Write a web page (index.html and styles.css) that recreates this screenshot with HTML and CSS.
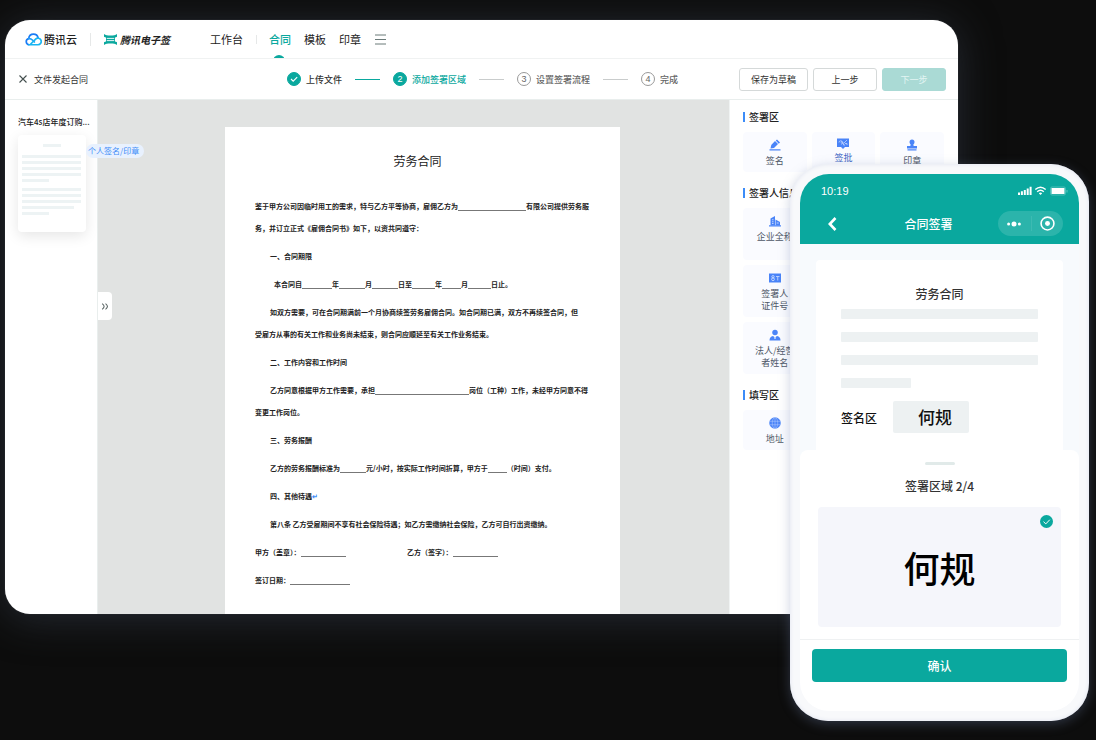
FILE: index.html
```html
<!DOCTYPE html>
<html lang="zh-CN">
<head>
<meta charset="utf-8">
<title>腾讯电子签</title>
<link rel="stylesheet" href="styles.css">
</head>
<body>
<div class="stage">
  <main class="window">
    <header class="topbar">
      <a class="brand" href="#">
        <svg class="brand-cloud" viewBox="0 0 34 26" fill="none" stroke-width="3.4" stroke-linecap="round" stroke-linejoin="round">
          <path d="M8 23.5a6.3 6.3 0 0 1-.6-12.4C8 6 12 2.300 17 2.300c4.600 0 8.300 3 9.300 7.400" stroke="#1a7cf5"/>
          <path d="M7.500 11.200c3.200-.6 5.300.8 7.300 2.800l4 4" stroke="#22a0f5"/>
          <path d="M8 23.500h18a6.600 6.600 0 1 0-4.800-11.300L10.500 23" stroke="#19b5f1"/>
        </svg>
        <span>腾讯云</span>
      </a>
      <span class="rule"></span>
      <a class="product" href="#">
        <svg class="product-mark" viewBox="0 0 26 22" fill="#0aa89e">
          <path d="M0 0c3 2.600 7 3.200 13 3.200S23 2.600 26 0v5.500c-1.500.8-2.800 1.200-4 1.500v8c1.200.3 2.500.7 4 1.500V22c-3-2.600-7-3.200-13-3.200S3 19.400 0 22v-5.500c1.500-.8 2.800-1.200 4-1.500V7C2.800 6.700 1.500 6.300 0 5.500z"/>
          <path d="M5.500 8.800h15M5.500 13.200h15" stroke="#fff" stroke-width="1.800"/>
        </svg>
        <span>腾讯电子签</span>
      </a>
      <nav class="nav">
        <a href="#">工作台</a>
        <span class="rule rule-short"></span>
        <a class="current" href="#">合同</a>
        <a href="#">模板</a>
        <a href="#">印章</a>
      </nav>
      <button class="icon-button" type="button" aria-label="菜单">
        <svg class="menu-icon" viewBox="0 0 11 11" stroke="#6b7a79" stroke-width="1"><path d="M0 1h11M0 5.500h11M0 10h11"/></svg>
      </button>
    </header>

    <div class="flowbar">
      <div class="flow-name">
        <button class="icon-button" type="button" aria-label="关闭">
          <svg class="close-icon" viewBox="0 0 8 8" stroke="#44504f" stroke-width="1.100"><path d="M.5.5l7 7M7.500.5l-7 7"/></svg>
        </button>
        <span>文件发起合同</span>
      </div>
      <ol class="steps">
        <li class="step done"><span class="dot"><svg class="tick" viewBox="0 0 8 8" fill="none" stroke="#fff" stroke-width="1.100"><path d="M1 4l2.200 2.200L7.200 2.200"/></svg></span>上传文件</li>
        <li class="link link-done"></li>
        <li class="step active"><span class="dot">2</span>添加签署区域</li>
        <li class="link"></li>
        <li class="step"><span class="dot">3</span>设置签署流程</li>
        <li class="link"></li>
        <li class="step"><span class="dot">4</span>完成</li>
      </ol>
      <div class="actions">
        <button class="button wide" type="button">保存为草稿</button>
        <button class="button" type="button">上一步</button>
        <button class="button primary" type="button" disabled>下一步</button>
      </div>
    </div>

    <div class="workspace">
      <aside class="files">
        <h2 class="file-name">汽车4s店年度订购...</h2>
        <div class="thumb">
          <i class="thumb-line head"></i>
          <i class="thumb-line"></i><i class="thumb-line"></i><i class="thumb-line"></i><i class="thumb-line"></i><i class="thumb-line short"></i>
          <i class="thumb-line next"></i><i class="thumb-line"></i><i class="thumb-line"></i><i class="thumb-line long"></i><i class="thumb-line short"></i>
          <span class="tag">个人签名/印章</span>
        </div>
      </aside>

      <section class="canvas">
        <button class="expand" type="button" aria-label="展开">
          <svg class="expand-icon" viewBox="0 0 8 8" fill="none" stroke="#55605f" stroke-width="1.200"><path d="M.8.8Q3 2.500 3 4T.8 7.200M4.600.8Q6.800 2.500 6.800 4T4.600 7.200"/></svg>
        </button>
        <article class="paper">
          <h1>劳务合同</h1>
          <p>鉴于甲方公司因临时用工的需求，特与乙方平等协商，雇佣乙方为<span class="blank b68"></span>有限公司提供劳务服<br>务，并订立正式《雇佣合同书》如下，以资共同遵守：</p>
          <p class="indent">一、合同期限</p>
          <p class="indent extra">本合同自<span class="blank b30"></span>年<span class="blank b26"></span>月<span class="blank b26"></span>日至<span class="blank b23"></span>年<span class="blank b19"></span>月<span class="blank b23"></span>日止。</p>
          <p class="indent">如双方需要，可在合同期满前一个月协商续签劳务雇佣合同。如合同期已满，双方不再续签合同，但<br>受雇方从事的有关工作和业务尚未结束，则合同应顺延至有关工作业务结束。</p>
          <p class="indent">二、工作内容和工作时间</p>
          <p class="indent">乙方同意根据甲方工作需要，承担<span class="blank b94"></span>岗位（工种）工作，未经甲方同意不得<br>变更工作岗位。</p>
          <p class="indent">三、劳务报酬</p>
          <p class="indent">乙方的劳务报酬标准为<span class="blank b26"></span>元/小时，按实际工作时间折算，甲方于<span class="blank b19"></span>（时间）支付。</p>
          <p class="indent">四、其他待遇<span class="return">↵</span></p>
          <p class="indent">第八条 乙方受雇期间不享有社会保险待遇；如乙方需缴纳社会保险，乙方可自行出资缴纳。</p>
          <p class="parties"><span>甲方（盖章）：<span class="blank b45"></span></span><span>乙方（签字）：<span class="blank b45"></span></span></p>
          <p>签订日期：<span class="blank b60"></span></p>
        </article>
      </section>

      <aside class="palette">
        <h2>签署区</h2>
        <div class="tiles">
          <button class="tile" type="button">
            <svg class="tile-icon" viewBox="0 0 24 24" fill="#4a84f8"><path d="M3 19l1.500-7L12 4l6 6-8 8z"/><path d="M13.500 3L16 1l6 6-2.500 2.500z"/><path d="M1 20.500h22v2.500H1z"/></svg>
            <span>签名</span>
          </button>
          <button class="tile chosen" type="button">
            <svg class="tile-icon" viewBox="0 0 24 24" fill="#4a84f8"><path d="M0 1h24v17h-8l-4 4-4-4H0z"/><path d="M4 9a3.500 3.500 0 1 1 4 3.500M8 9.500a2 2 0 1 1 3 2M20 4l-7 7v3h3M16 11h4v3" fill="none" stroke="#dbe7ff" stroke-width="1.300"/></svg>
            <span>签批</span>
          </button>
          <button class="tile" type="button">
            <svg class="tile-icon" viewBox="0 0 24 24" fill="#4a84f8"><circle cx="12" cy="6" r="5"/><path d="M9.500 9h5l.8 5H22v5H2v-5h6.700z"/><path d="M3 20.500h18V23H3z"/></svg>
            <span>印章</span>
          </button>
        </div>
        <h2>签署人信息</h2>
        <div class="tiles tall">
          <button class="tile" type="button">
            <svg class="tile-icon" viewBox="0 0 24 24" fill="#4a84f8"><path d="M3 7l9-5v19H3z"/><path d="M13 9l9 5v7h-9z"/><path d="M0 20.500h24V23H0z"/><path d="M6 9.500h3M6 13.500h3M6 17h3M15.500 16h4" stroke="#fff" stroke-width="1.300"/></svg>
            <span>企业全称</span>
          </button>
          <button class="tile" type="button">
            <svg class="tile-icon" viewBox="0 0 24 24" fill="#4a84f8"><path d="M0 3h24v18H0z"/><g fill="none" stroke="#dbe7ff" stroke-width="1.500"><circle cx="8" cy="9.500" r="2.400"/><circle cx="8" cy="14.500" r="2.800"/><path d="M14 9h7M17.500 9v8"/></g></svg>
            <span>签署人<br>证件号</span>
          </button>
          <button class="tile" type="button">
            <svg class="tile-icon" viewBox="0 0 24 24" fill="#4a84f8"><circle cx="12" cy="7" r="5.500"/><path d="M1 23q0-8 7-9l4 3 4-3q7 1 7 9z"/><path d="M12 16v4" stroke="#fff" stroke-width="2"/></svg>
            <span>法人/经营<br>者姓名</span>
          </button>
        </div>
        <h2>填写区</h2>
        <div class="tiles">
          <button class="tile" type="button">
            <svg class="tile-icon" viewBox="0 0 24 24"><circle cx="12" cy="12" r="11.500" fill="#4a84f8"/><g fill="none" stroke="#a9c4fd" stroke-width="1.200"><ellipse cx="12" cy="12" rx="5.500" ry="11"/><path d="M12 0v24M1 8.500h22M1 15.500h22"/></g></svg>
            <span>地址</span>
          </button>
        </div>
      </aside>
    </div>
  </main>

  <section class="phone">
    <div class="screen">
      <header class="phone-head">
        <div class="status">
          <span>10:19</span>
          <svg class="status-icons" viewBox="0 0 50 10" fill="#fff">
            <path d="M0 6.500h2V9H0zM2.900 5.300h2V9h-2zM5.800 3.900h2V9h-2zM8.700 2.400h2V9h-2zM11.600.7h2V9h-2z"/>
            <g fill="none" stroke="#fff" stroke-width="1.500"><path d="M17.300 3.500q5.200-4.600 10.400 0M19.200 5.700q3.300-2.800 6.600 0"/></g>
            <path d="M20.800 7.200q1.700-1.400 3.400 0L22.500 9z"/>
            <rect x="32.500" y="1" width="15" height="8" rx="1.500" fill="none" stroke="#5cc5bf" stroke-width=".8"/>
            <path d="M33.500 2h13v6h-13z"/><path d="M48.500 4h1v2.400h-1z" fill="#5cc5bf"/>
          </svg>
        </div>
        <div class="phone-nav">
          <button class="icon-button back" type="button" aria-label="返回">
            <svg class="back-icon" viewBox="0 0 9 14" fill="none" stroke="#fff" stroke-width="2.600"><path d="M7.500 1L1.800 7l5.700 6"/></svg>
          </button>
          <h2>合同签署</h2>
          <div class="capsule">
            <button class="icon-button" type="button" aria-label="更多"><svg class="more-icon" viewBox="0 0 14 6" fill="#fff"><circle cx="1.600" cy="3" r="1.500"/><circle cx="7" cy="3" r="2.500"/><circle cx="12.400" cy="3" r="1.500"/></svg></button>
            <button class="icon-button target" type="button" aria-label="关闭"><svg class="target-icon" viewBox="0 0 14 14" fill="none" stroke="#fff" stroke-width="1.500"><circle cx="7" cy="7" r="6"/><circle cx="7" cy="7" r="2.300" fill="#fff" stroke="none"/></svg></button>
          </div>
        </div>
      </header>

      <div class="preview">
        <div class="preview-card">
          <h3>劳务合同</h3>
          <i class="bar"></i><i class="bar"></i><i class="bar"></i><i class="bar bar-short"></i>
          <div class="sign-row"><span>签名区</span><span class="sign-slot">何规</span></div>
        </div>
      </div>

      <div class="sheet">
        <i class="handle"></i>
        <h3>签署区域 2/4</h3>
        <div class="signature">
          <span>何规</span>
          <svg class="picked" viewBox="0 0 13 13" fill="none"><circle cx="6.500" cy="6.500" r="6.500" fill="#0aa89e"/><path d="M3.500 6.700l2.300 2.200 4-4.200" stroke="#fff" stroke-width="1"/></svg>
        </div>
        <footer class="confirm-bar"><button class="confirm" type="button">确认</button></footer>
      </div>
    </div>
  </section>
</div>
</body>
</html>
```
FILE: styles.css
```css
* { box-sizing: border-box; }

body {
  margin: 0;
  background: #0d0d0d;
  color: #333;
  font-family: "Noto Sans CJK SC", "Noto Sans", sans-serif;
}

h1, h2, h3, p, ol { margin: 0; padding: 0; font-weight: 500; }
a { color: inherit; text-decoration: none; }
i { display: block; }
svg { display: block; flex: none; }
button { font-family: inherit; padding: 0; border: 0; background: none; color: inherit; }

.icon-button { display: flex; align-items: center; justify-content: center; }

.stage {
  position: relative;
  min-height: 100vh;
  padding: 20px 138px 126px 5px;
  overflow: hidden;
}

/* Desktop window */
.window {
  overflow: hidden;
  border-radius: 25px;
  background: #fff;
  box-shadow: 0 4px 40px #262b33, 0 0 1px #888;
}

.topbar {
  display: flex;
  align-items: center;
  height: 39px;
  padding: 0 20px;
  border-bottom: 1px solid #f0f2f2;
  font-size: 11px;
  color: #222;
}

.brand, .product { display: flex; align-items: center; gap: 2px; }
.brand { font-weight: 500; }
.brand-cloud { width: 17px; height: 13px; }
.rule { width: 1px; height: 13px; margin: 0 13px; background: #e6e8e8; }
.rule-short { height: 9px; }
.product { gap: 3px; font-size: 10px; font-weight: 700; font-style: italic; }
.product-mark { width: 13px; height: 11px; }
.nav { display: flex; align-items: center; align-self: stretch; margin-left: 40px; margin-right: 14px; }
.nav a { display: flex; align-items: center; align-self: stretch; margin-right: 13px; }
.nav a:first-child, .nav a:last-child { margin-right: 0; }
.nav .rule-short { margin: 0 12px 0 13px; }
.nav .current { position: relative; overflow: hidden; color: #0aa89e; font-weight: 500; }
.nav .current::after {
  content: "";
  position: absolute;
  left: 4px;
  bottom: -9px;
  width: 12px;
  height: 12px;
  border-radius: 50%;
  background: #0aa89e;
}
.menu-icon { width: 11px; height: 11px; }

.flowbar {
  display: grid;
  grid-template-columns: 1fr auto 1fr;
  align-items: center;
  height: 41px;
  padding: 0 12px 0 14px;
  border-bottom: 1px solid #e9eeed;
  font-size: 9px;
}
.flow-name { display: flex; align-items: center; gap: 7px; }
.close-icon { width: 8px; height: 8px; }
.steps { display: flex; align-items: center; gap: 13px; list-style: none; }
.step { display: flex; align-items: center; gap: 5px; color: #666; }
.dot {
  display: flex;
  align-items: center;
  justify-content: center;
  width: 14px;
  height: 14px;
  border: 1px solid #999;
  border-radius: 50%;
  font-family: "Liberation Sans", Arial, sans-serif;
}
.done { color: #333; }
.active { color: #0aa89e; font-weight: 500; }
.done .dot, .active .dot { border-color: #0aa89e; background: #0aa89e; color: #fff; }
.tick { width: 8px; height: 8px; }
.link { width: 25px; height: 1px; background: #c9cccc; }
.link-done { background: #0aa89e; }
.actions { display: flex; justify-content: flex-end; gap: 5px; }
.button {
  width: 64px;
  height: 23px;
  border: 1px solid #d5d9d9;
  border-radius: 3px;
  background: #fff;
  font-size: 9px;
  color: #333;
}
.wide { width: 69px; }
.primary { border-color: #aadad5; background: #aadad5; color: #e2f5f3; }

.workspace { display: grid; grid-template-columns: 93px 1fr 229px; }

.files { padding: 14px 11px 0 13px; border-right: 1px solid #e9eeed; }
.file-name { font-size: 8px; line-height: 16px; font-weight: 500; color: #222; white-space: nowrap; }
.thumb {
  position: relative;
  height: 97px;
  margin-top: 5px;
  padding: 9px 5px 0 4px;
  border-radius: 4px;
  background: #fff;
  box-shadow: 0 4px 14px rgba(0, 0, 0, .1);
}
.thumb-line { height: 3px; margin-bottom: 3px; background: #edf3f4; }
.thumb-line.head { width: 18px; margin: 0 auto 8px; }
.thumb-line.next { margin-top: 6px; }
.thumb-line.short { width: 27px; }
.thumb-line.long { width: 52px; }
.tag {
  position: absolute;
  left: 68px;
  top: 9px;
  z-index: 1;
  padding: 0 5px 0 2px;
  border-radius: 7px;
  background: #e8f1fe;
  color: #3c8cf8;
  font-size: 8px;
  line-height: 14px;
  white-space: nowrap;
}

.canvas { position: relative; padding: 27px 109px 0 127px; background: #e1e3e2; }
.expand {
  position: absolute;
  left: 0;
  top: 192px;
  display: flex;
  align-items: center;
  justify-content: center;
  width: 14px;
  height: 28px;
  border-radius: 0 4px 4px 0;
  background: #fff;
}
.expand-icon { width: 8px; height: 7px; }

.paper {
  padding: 22px 20px 17px 30px;
  background: #fff;
  color: #222;
  font-size: 7px;
  line-height: 22px;
}
.paper h1 { margin: 0 20px 22px 0; font-size: 12px; line-height: 24px; font-weight: 400; text-align: center; color: #222; }
.paper p { margin-bottom: 6px; font-weight: 700; white-space: nowrap; }
.paper .indent { text-indent: 15px; }
.paper .extra { text-indent: 19px; }
.blank { display: inline-block; height: 7px; border-bottom: 1px solid #777; vertical-align: middle; }
.b19 { width: 19px; }
.b23 { width: 23px; }
.b26 { width: 26px; }
.b30 { width: 30px; }
.b45 { width: 45px; }
.b60 { width: 60px; }
.b68 { width: 68px; }
.b94 { width: 94px; }
.return { color: #3c8cf8; }
.paper .parties { display: grid; grid-template-columns: 152px 1fr; }

.palette { padding: 9px 14px 20px 13px; border-left: 1px solid #f0f3f3; }
.palette h2 {
  display: flex;
  align-items: center;
  gap: 4px;
  margin-bottom: 7px;
  font-size: 10px;
  line-height: 16px;
  color: #222;
}
.palette h2::before { content: ""; width: 2px; height: 10px; background: #3c8cf8; }
.tiles {
  display: grid;
  grid-template-columns: repeat(3, 1fr);
  grid-auto-rows: 40px;
  gap: 5px;
  margin-bottom: 13px;
}
.tile {
  display: flex;
  flex-direction: column;
  align-items: center;
  gap: 4px;
  padding-top: 7px;
  border-radius: 4px;
  background: #fafbff;
  color: #4d5666;
  font-size: 9px;
  line-height: 12px;
}
.tall { grid-auto-rows: 52px; }
.tall .tile { grid-column: 1; gap: 4px; }
.chosen { color: #4468c4; gap: 2px; padding-top: 6px; }
.tile-icon { width: 12px; height: 12px; }

/* Phone in front of the window */
.phone {
  position: absolute;
  top: 164px;
  right: 7px;
  width: 299px;
  padding: 10px;
  border-radius: 38px;
  background: #f8f9fb;
  box-shadow: 0 3px 12px rgba(110, 125, 165, .35), inset 0 0 4px #dfe3ef;
}
.screen { overflow: hidden; border-radius: 29px; background: #f7fafd; }
.phone-head { padding-bottom: 5px; background: #0aa89e; color: #fff; }
.status {
  display: flex;
  align-items: center;
  justify-content: space-between;
  height: 34px;
  padding: 0 11px 0 21px;
  font-family: "Liberation Sans", Arial, sans-serif;
  font-size: 11px;
}
.status-icons { width: 50px; height: 10px; }
.phone-nav {
  display: grid;
  grid-template-columns: 81px 1fr 81px;
  align-items: center;
  height: 31px;
}
.back { justify-content: flex-start; padding-left: 28px; }
.back-icon { width: 9px; height: 14px; }
.phone-nav h2 { margin-right: 22px; font-size: 12px; line-height: 18px; text-align: center; }
.capsule {
  display: grid;
  grid-template-columns: 1fr 1fr;
  width: 65px;
  height: 25px;
  border-radius: 13px;
  background: #2bb4ab;
}
.more-icon { width: 14px; height: 6px; }
.target { margin: 5px 0; border-left: 1px solid #3dbab2; }
.target-icon { width: 15px; height: 15px; }

.preview { padding: 16px 16px 0; }
.preview-card { height: 190px; padding: 24px 25px 0; border-radius: 4px 4px 0 0; background: #fff; }
.preview-card h3 { margin-bottom: 5px; font-size: 12px; line-height: 20px; text-align: center; color: #333; }
.bar { height: 10px; margin-bottom: 13px; border-radius: 1px; background: #edf1f2; }
.bar-short { width: 70px; }
.sign-row { display: flex; align-items: center; gap: 16px; font-size: 12px; font-weight: 500; color: #111; }
.sign-slot {
  width: 76px;
  padding-left: 8px;
  border-radius: 2px;
  background: #edf1f2;
  font-size: 17px;
  line-height: 32px;
  text-align: center;
}

.sheet { padding-top: 12px; border-radius: 8px 8px 0 0; background: #fff; }
.handle { width: 30px; height: 3px; margin: 0 auto 11px; border-radius: 2px; background: #e1eae9; }
.sheet h3 { font-size: 12px; line-height: 20px; text-align: center; color: #333; }
.signature {
  position: relative;
  display: flex;
  align-items: center;
  justify-content: center;
  height: 120px;
  margin: 11px 18px 12px;
  border-radius: 4px;
  background: #f5f6fb;
  color: #000;
  font-size: 36px;
  font-weight: 500;
}
.picked { position: absolute; top: 8px; right: 8px; width: 13px; height: 13px; }
.confirm-bar { padding: 9px 12px 29px; border-top: 1px solid #eff1f2; }
.confirm {
  display: block;
  width: 100%;
  height: 33px;
  border-radius: 4px;
  background: #0aa89e;
  color: #fff;
  font-size: 12px;
  font-weight: 500;
}
```
